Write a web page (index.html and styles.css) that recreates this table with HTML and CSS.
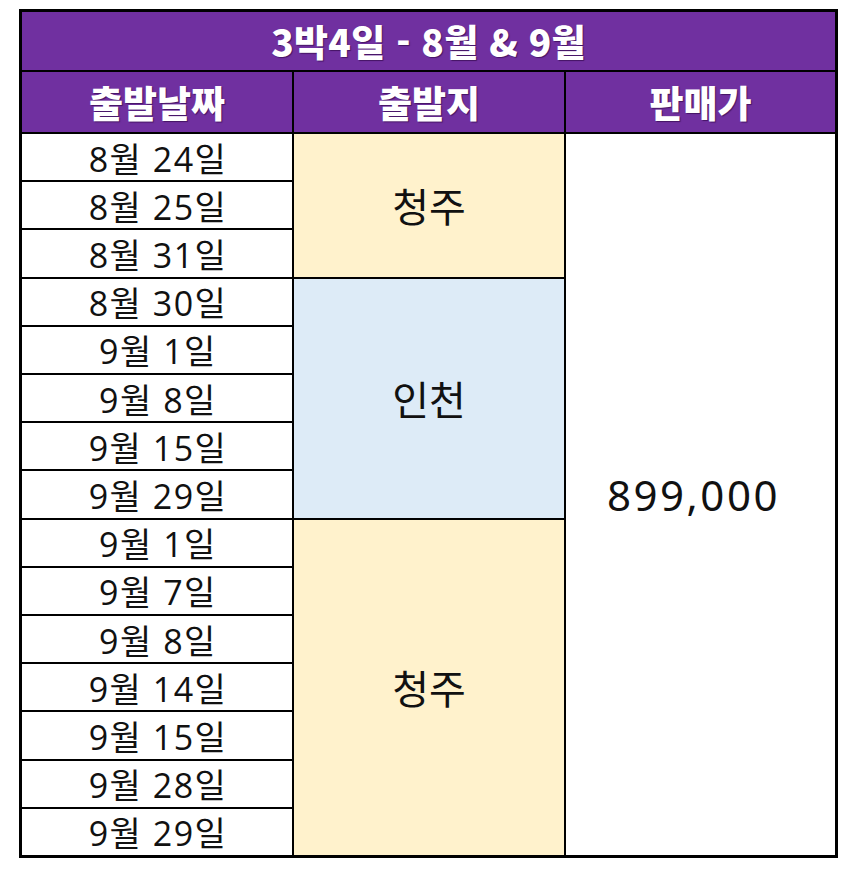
FILE: index.html
```html
<!DOCTYPE html>
<html lang="ko">
<head>
<meta charset="utf-8">
<title>3박4일 - 8월 &amp; 9월</title>
<link rel="stylesheet" href="styles.css">
</head>
<body>
<div class="table">
  <div class="cell title span3">3박4일 - 8월 &amp; 9월</div>
  <div class="cell head">출발날짜</div>
  <div class="cell head">출발지</div>
  <div class="cell head">판매가</div>

  <div class="cell date">8월 24일</div>
  <div class="cell place yellow rows3">청주</div>
  <div class="cell price rows15">899,000</div>
  <div class="cell date">8월 25일</div>
  <div class="cell date">8월 31일</div>

  <div class="cell date">8월 30일</div>
  <div class="cell place blue rows5">인천</div>
  <div class="cell date">9월 1일</div>
  <div class="cell date">9월 8일</div>
  <div class="cell date">9월 15일</div>
  <div class="cell date">9월 29일</div>

  <div class="cell date">9월 1일</div>
  <div class="cell place yellow rows7">청주</div>
  <div class="cell date">9월 7일</div>
  <div class="cell date">9월 8일</div>
  <div class="cell date">9월 14일</div>
  <div class="cell date">9월 15일</div>
  <div class="cell date">9월 28일</div>
  <div class="cell date">9월 29일</div>
</div>
</body>
</html>
```
FILE: styles.css
```css
* { box-sizing: border-box; }
html, body { margin: 0; padding: 0; background: #fff; }
body {
  padding: 9px 0 0 19px;
  font-family: "Noto Sans CJK KR", "Noto Sans", sans-serif;
}
.table {
  display: grid;
  width: 819px;
  height: 849px;
  border: 3px solid #000;
  background: #000;
  gap: 2px;
  grid-template-columns: 270px 270px 269px;
  grid-template-rows: 58px 60px repeat(15, minmax(0, 1fr));
}
.cell {
  display: flex;
  align-items: center;
  justify-content: center;
  background: #fff;
  color: #111;
  line-height: 1;
  overflow: hidden;
}
.span3 { grid-column: 1 / span 3; }
.rows3 { grid-row: span 3; }
.rows5 { grid-row: span 5; }
.rows7 { grid-row: span 7; }
.rows15 { grid-row: span 15; }
.title, .head {
  background: #7030a0;
  color: #fff;
  font-weight: 900;
  font-size: 37px;
  letter-spacing: 0.3px;
  text-shadow: 1px 1px 1px rgba(40, 0, 60, 0.6);
}
.head { font-size: 37px; letter-spacing: 0; }
.date {
  grid-column: 1;
  font-family: "Open Sans", "Noto Sans CJK KR", sans-serif;
  font-size: 34px;
  letter-spacing: 1.5px;
  padding: 3px 0 0 2px;
}
.place {
  grid-column: 2;
  font-size: 40px;
}
.yellow { background: #fff2cc; }
.blue { background: #ddebf7; }
.price {
  grid-column: 3;
  font-family: "Noto Sans", "Noto Sans CJK KR", sans-serif;
  font-size: 42px;
  letter-spacing: 2.5px;
  padding-right: 14px;
}
```
